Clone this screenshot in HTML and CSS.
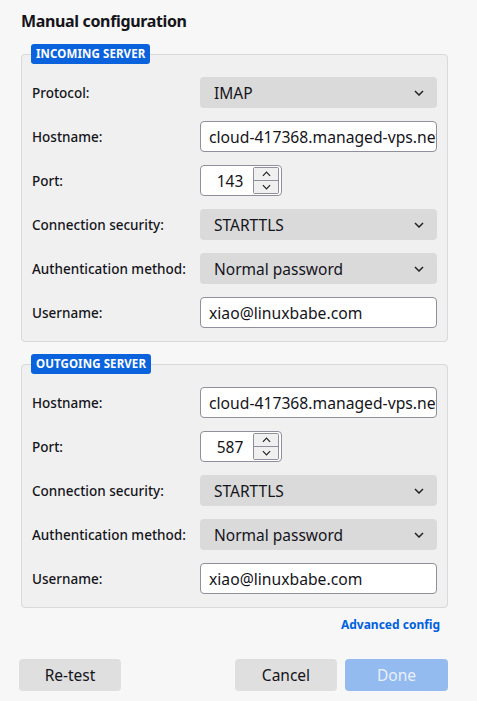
FILE: index.html
```html
<!DOCTYPE html>
<html>
<head>
<meta charset="utf-8">
<link rel="stylesheet" href="styles.css">
</head>
<body>
<div class="page">
  <h1 class="title">Manual configuration</h1>

  <fieldset class="group">
    <legend class="tag">INCOMING SERVER</legend>
    <div class="rows">
      <label class="lbl">Protocol:</label>
      <div class="select"><span>IMAP</span><svg class="chev" viewBox="0 0 10 6" width="10" height="6"><path d="M1 1l4 4 4-4" fill="none" stroke="#222" stroke-width="1.5"/></svg></div>

      <label class="lbl">Hostname:</label>
      <div class="input"><span>cloud-417368.managed-vps.net</span></div>

      <label class="lbl">Port:</label>
      <div class="spin"><span class="num">143</span><div class="btns"><div class="b"><svg viewBox="0 0 10 6" width="9" height="6"><path d="M1 5l4-4 4 4" fill="none" stroke="#222" stroke-width="1.3"/></svg></div><div class="b"><svg viewBox="0 0 10 6" width="9" height="6"><path d="M1 1l4 4 4-4" fill="none" stroke="#222" stroke-width="1.3"/></svg></div></div></div>

      <label class="lbl">Connection security:</label>
      <div class="select"><span>STARTTLS</span><svg class="chev" viewBox="0 0 10 6" width="10" height="6"><path d="M1 1l4 4 4-4" fill="none" stroke="#222" stroke-width="1.5"/></svg></div>

      <label class="lbl">Authentication method:</label>
      <div class="select"><span>Normal password</span><svg class="chev" viewBox="0 0 10 6" width="10" height="6"><path d="M1 1l4 4 4-4" fill="none" stroke="#222" stroke-width="1.5"/></svg></div>

      <label class="lbl">Username:</label>
      <div class="input"><span>xiao@linuxbabe.com</span></div>
    </div>
  </fieldset>

  <fieldset class="group">
    <legend class="tag">OUTGOING SERVER</legend>
    <div class="rows">
      <label class="lbl">Hostname:</label>
      <div class="input"><span>cloud-417368.managed-vps.net</span></div>

      <label class="lbl">Port:</label>
      <div class="spin"><span class="num">587</span><div class="btns"><div class="b"><svg viewBox="0 0 10 6" width="9" height="6"><path d="M1 5l4-4 4 4" fill="none" stroke="#222" stroke-width="1.3"/></svg></div><div class="b"><svg viewBox="0 0 10 6" width="9" height="6"><path d="M1 1l4 4 4-4" fill="none" stroke="#222" stroke-width="1.3"/></svg></div></div></div>

      <label class="lbl">Connection security:</label>
      <div class="select"><span>STARTTLS</span><svg class="chev" viewBox="0 0 10 6" width="10" height="6"><path d="M1 1l4 4 4-4" fill="none" stroke="#222" stroke-width="1.5"/></svg></div>

      <label class="lbl">Authentication method:</label>
      <div class="select"><span>Normal password</span><svg class="chev" viewBox="0 0 10 6" width="10" height="6"><path d="M1 1l4 4 4-4" fill="none" stroke="#222" stroke-width="1.5"/></svg></div>

      <label class="lbl">Username:</label>
      <div class="input"><span>xiao@linuxbabe.com</span></div>
    </div>
  </fieldset>

  <div class="adv"><a class="link">Advanced config</a></div>

  <div class="actions">
    <button class="btn">Re-test</button>
    <div class="right">
      <button class="btn">Cancel</button>
      <button class="btn primary">Done</button>
    </div>
  </div>
</div>
</body>
</html>
```
FILE: styles.css
```css
html, body {
  margin: 0;
  padding: 0;
  background: #f7f7f7;
}
body {
  font-family: "Noto Sans", "DejaVu Sans", sans-serif;
  color: #15141a;
}
.page {
  padding: 11px 29px 0 21px;
}
.title {
  margin: 0;
  font-size: 16px;
  font-weight: 700;
  line-height: 21px;
  letter-spacing: -0.35px;
}
.group {
  margin: 12px 0 0 0;
  padding: 0 10px 13px 10px;
  border: 1px solid #d9d9d9;
  border-radius: 4px;
  background: #f0f0f0;
}
.group + .group {
  margin-top: 12px;
}
.tag {
  background: #0a62dc;
  color: #fff;
  font-size: 11.5px;
  font-weight: 700;
  line-height: 20px;
  height: 20px;
  padding: 0 5px;
  margin-left: -1px;
  border-radius: 3px;
  letter-spacing: 0.1px;
}
.rows {
  display: grid;
  grid-template-columns: 168px 1fr;
  row-gap: 13px;
  align-items: center;
  padding-top: 13px;
}
.lbl {
  font-size: 13.5px;
  font-weight: 500;
}
.select, .input, .spin {
  height: 31px;
  box-sizing: border-box;
  border-radius: 4px;
  font-size: 15.5px;
  display: flex;
  align-items: center;
  overflow: hidden;
  white-space: nowrap;
}
.select {
  background: #dadada;
  padding: 0 13px 0 14px;
  justify-content: space-between;
}
.input {
  background: #fff;
  border: 1px solid #8f8f9d;
  padding: 0 0 0 8px;
  font-size: 15.7px;
}
.spin {
  background: #fff;
  border: 1px solid #8f8f9d;
  width: 82px;
  padding: 0 1px 0 0;
  justify-content: space-between;
}
.num {
  flex: 1;
  text-align: center;
  padding-left: 6px;
}
.btns {
  display: flex;
  flex-direction: column;
  width: 26px;
  height: 27px;
  border: 1px solid #8f8f9d;
  border-radius: 2px;
  box-sizing: border-box;
  margin-right: 1px;
}
.b {
  flex: 1;
  display: flex;
  align-items: center;
  justify-content: center;
  background: #f0f0f0;
}
.b + .b {
  border-top: 1px solid #8f8f9d;
}
.adv {
  display: flex;
  justify-content: flex-end;
  padding: 8px 8px 0 0;
  height: 30px;
  box-sizing: border-box;
}
.link {
  color: #0060df;
  font-size: 12px;
  font-weight: 700;
}
.actions {
  display: flex;
  justify-content: space-between;
  margin: 21px 0 0 -2px;
}
.right {
  display: flex;
  gap: 8px;
}
.btn {
  width: 102px;
  height: 32px;
  border: none;
  border-radius: 4px;
  background: #dfdfdf;
  color: #15141a;
  font-family: inherit;
  font-size: 15.5px;
  padding: 0;
}
.btn.primary {
  width: 103px;
  background: #94bbef;
  color: #e8f0fb;
}
```
